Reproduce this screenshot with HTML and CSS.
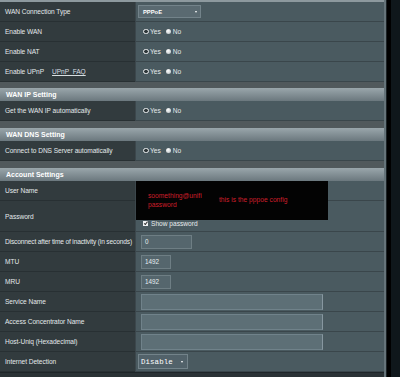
FILE: index.html
```html
<!DOCTYPE html>
<html>
<head>
<meta charset="utf-8">
<link rel="stylesheet" href="styles.css">
</head>
<body>
<div class="screen">
  <div class="panel">
    <div class="topstrip"></div>
    <div class="table">
      <div class="row"><div class="th">WAN Connection Type</div><div class="td"><div class="select sel-type"><span class="sel-text">PPPoE</span><span class="arrow"></span></div></div></div>
      <div class="row"><div class="th">Enable WAN</div><div class="td"><span class="radio on"></span><span class="rl">Yes</span><span class="radio off"></span><span class="rl">No</span></div></div>
      <div class="row"><div class="th">Enable NAT</div><div class="td"><span class="radio on"></span><span class="rl">Yes</span><span class="radio off"></span><span class="rl">No</span></div></div>
      <div class="row"><div class="th">Enable UPnP <a class="faq">UPnP&nbsp;&nbsp;FAQ</a></div><div class="td"><span class="radio on"></span><span class="rl">Yes</span><span class="radio off"></span><span class="rl">No</span></div></div>
    </div>

    <div class="section first">
      <div class="header">WAN IP Setting</div>
      <div class="row"><div class="th">Get the WAN IP automatically</div><div class="td"><span class="radio on"></span><span class="rl">Yes</span><span class="radio off"></span><span class="rl">No</span></div></div>
    </div>

    <div class="section">
      <div class="header">WAN DNS Setting</div>
      <div class="row"><div class="th">Connect to DNS Server automatically</div><div class="td"><span class="radio on"></span><span class="rl">Yes</span><span class="radio off"></span><span class="rl">No</span></div></div>
    </div>

    <div class="section">
      <div class="header">Account Settings</div>
      <div class="account">
        <div class="row"><div class="th">User Name</div><div class="td"></div></div>
        <div class="row tall"><div class="th">Password</div><div class="td col"><span class="showpw"><span class="check"></span>Show password</span></div></div>
        <div class="row"><div class="th narrow">Disconnect after time of inactivity (in seconds)</div><div class="td"><span class="input w50">0</span></div></div>
        <div class="row"><div class="th">MTU</div><div class="td"><span class="input w30">1492</span></div></div>
        <div class="row"><div class="th">MRU</div><div class="td"><span class="input w30">1492</span></div></div>
        <div class="row"><div class="th">Service Name</div><div class="td"><span class="input wide"></span></div></div>
        <div class="row"><div class="th">Access Concentrator Name</div><div class="td"><span class="input wide"></span></div></div>
        <div class="row"><div class="th">Host-Uniq (Hexadecimal)</div><div class="td"><span class="input wide"></span></div></div>
        <div class="row"><div class="th">Internet Detection</div><div class="td"><div class="select sel-detect"><span class="sel-text mono">Disable</span><span class="arrow"></span></div></div></div>
        <div class="overlay">
          <div class="ov-left"><div>soomething@unifi</div><div>password</div></div>
          <div class="ov-right">this is the pppoe config</div>
        </div>
      </div>
    </div>
    <div class="footer"></div>
  </div>
  <div class="edge"></div>
  <div class="black"></div>
  <div class="outside"></div>
</div>
</body>
</html>
```

FILE: styles.css
```css
* { box-sizing: border-box; margin: 0; padding: 0; }
html, body { width: 400px; height: 377px; overflow: hidden; }
body {
  background: #0f171b;
  font-family: "Liberation Sans", Arial, sans-serif;
  font-size: 6.6px;
  color: #e4e9eb;
}
.screen { display: flex; height: 377px; }
.panel {
  width: 384px;
  background: #51595c;
  display: flex;
  flex-direction: column;
}
.edge { width: 3px; background: #66747a; border-right: 1px solid #1c2326; }
.black { width: 4px; background: #000; }
.outside { flex: 1; background: #0f171b; }

.topstrip { height: 2px; background: #8d999e; }

.row {
  display: grid;
  grid-template-columns: 135px 1fr;
  height: 20px;
}
.row.tall { height: 31px; }
.th {
  background: #323b3e;
  border-bottom: 1px solid #283033;
  padding-left: 5px;
  display: flex;
  align-items: center;
  white-space: nowrap;
  letter-spacing: -0.05px;
}
.th.narrow { letter-spacing: -0.15px; }
.td {
  background: #4a5a60;
  border-left: 1px solid #3c474c;
  border-bottom: 1px solid #3a464b;
  display: flex;
  align-items: center;
  padding-left: 4px;
}
.td.col {
  flex-direction: column;
  align-items: flex-start;
  justify-content: flex-end;
  padding-bottom: 4px;
}

.section { margin-top: 7px; }
.section.first { margin-top: 6px; }
.header {
  height: 13px;
  background: linear-gradient(#9aa6ab, #6b787e);
  color: #fff;
  font-weight: bold;
  font-size: 7px;
  padding-left: 6px;
  display: flex;
  align-items: center;
}

.faq {
  margin-left: 8px;
  color: #d8dfe2;
  text-decoration: underline;
}

.radio {
  width: 5.5px;
  height: 5.5px;
  border-radius: 50%;
  flex: none;
}
.radio.on { margin-left: 3px; border: 1.6px solid #eef1f2; background: #2f383b; }
.radio.off { margin-left: 5px; background: radial-gradient(circle at 40% 35%, #ffffff, #b4bbbe); }
.rl { margin-left: 1.5px; color: #e6eaec; }

.select {
  height: 13px;
  margin-left: -2px;
  background: #5a6a71;
  border: 1px solid #73838a;
  display: flex;
  align-items: center;
  justify-content: space-between;
  padding: 0 3px 0 4px;
}
.sel-type { width: 63px; }
.sel-detect { width: 50px; height: 15px; padding-left: 2px; padding-right: 4px; background: #52626a; }
.sel-text { color: #fff; font-weight: bold; font-size: 5.8px; }
.sel-text.mono { font-family: "Liberation Mono", monospace; font-size: 7.4px; font-weight: normal; letter-spacing: 0.1px; }
.arrow {
  width: 0;
  height: 0;
  border-left: 1.5px solid transparent;
  border-right: 1.5px solid transparent;
  border-top: 2.5px solid #fff;
}

.showpw {
  display: flex;
  align-items: center;
  margin-left: 3px;
  color: #e8ecee;
}
.check {
  width: 5px;
  height: 5px;
  background: #eef1f2;
  margin-right: 3px;
  position: relative;
}
.check::after {
  content: "";
  position: absolute;
  left: 1.5px;
  top: 0.2px;
  width: 1.2px;
  height: 2.6px;
  border-right: 0.8px solid #333;
  border-bottom: 0.8px solid #333;
  transform: rotate(40deg);
}

.input {
  height: 14px;
  margin-left: 1px;
  background: #55666d;
  border: 1px solid #6e7e84;
  color: #e8eef0;
  font-size: 6.3px;
  display: flex;
  align-items: center;
  padding-left: 3px;
}
.w50 { width: 51px; }
.w30 { width: 30px; }
.input.wide {
  width: 182px;
  height: 16px;
  background: #5d6f76;
  border-color: #70828a;
  border-right-color: #8797a0;
}

.account { position: relative; }
.overlay {
  position: absolute;
  left: 136px;
  top: 0;
  width: 192px;
  height: 39px;
  background: #030303;
  color: #cf1f2b;
  font-size: 6.7px;
  display: grid;
  grid-template-columns: 83px auto;
}
.ov-left { padding-left: 12px; padding-top: 9.5px; line-height: 9px; }
.ov-right { padding-top: 14px; line-height: 9px; }

.footer {
  flex: 1;
  background: #2a3235;
  border-top: 1px solid #1e2528;
}
```
